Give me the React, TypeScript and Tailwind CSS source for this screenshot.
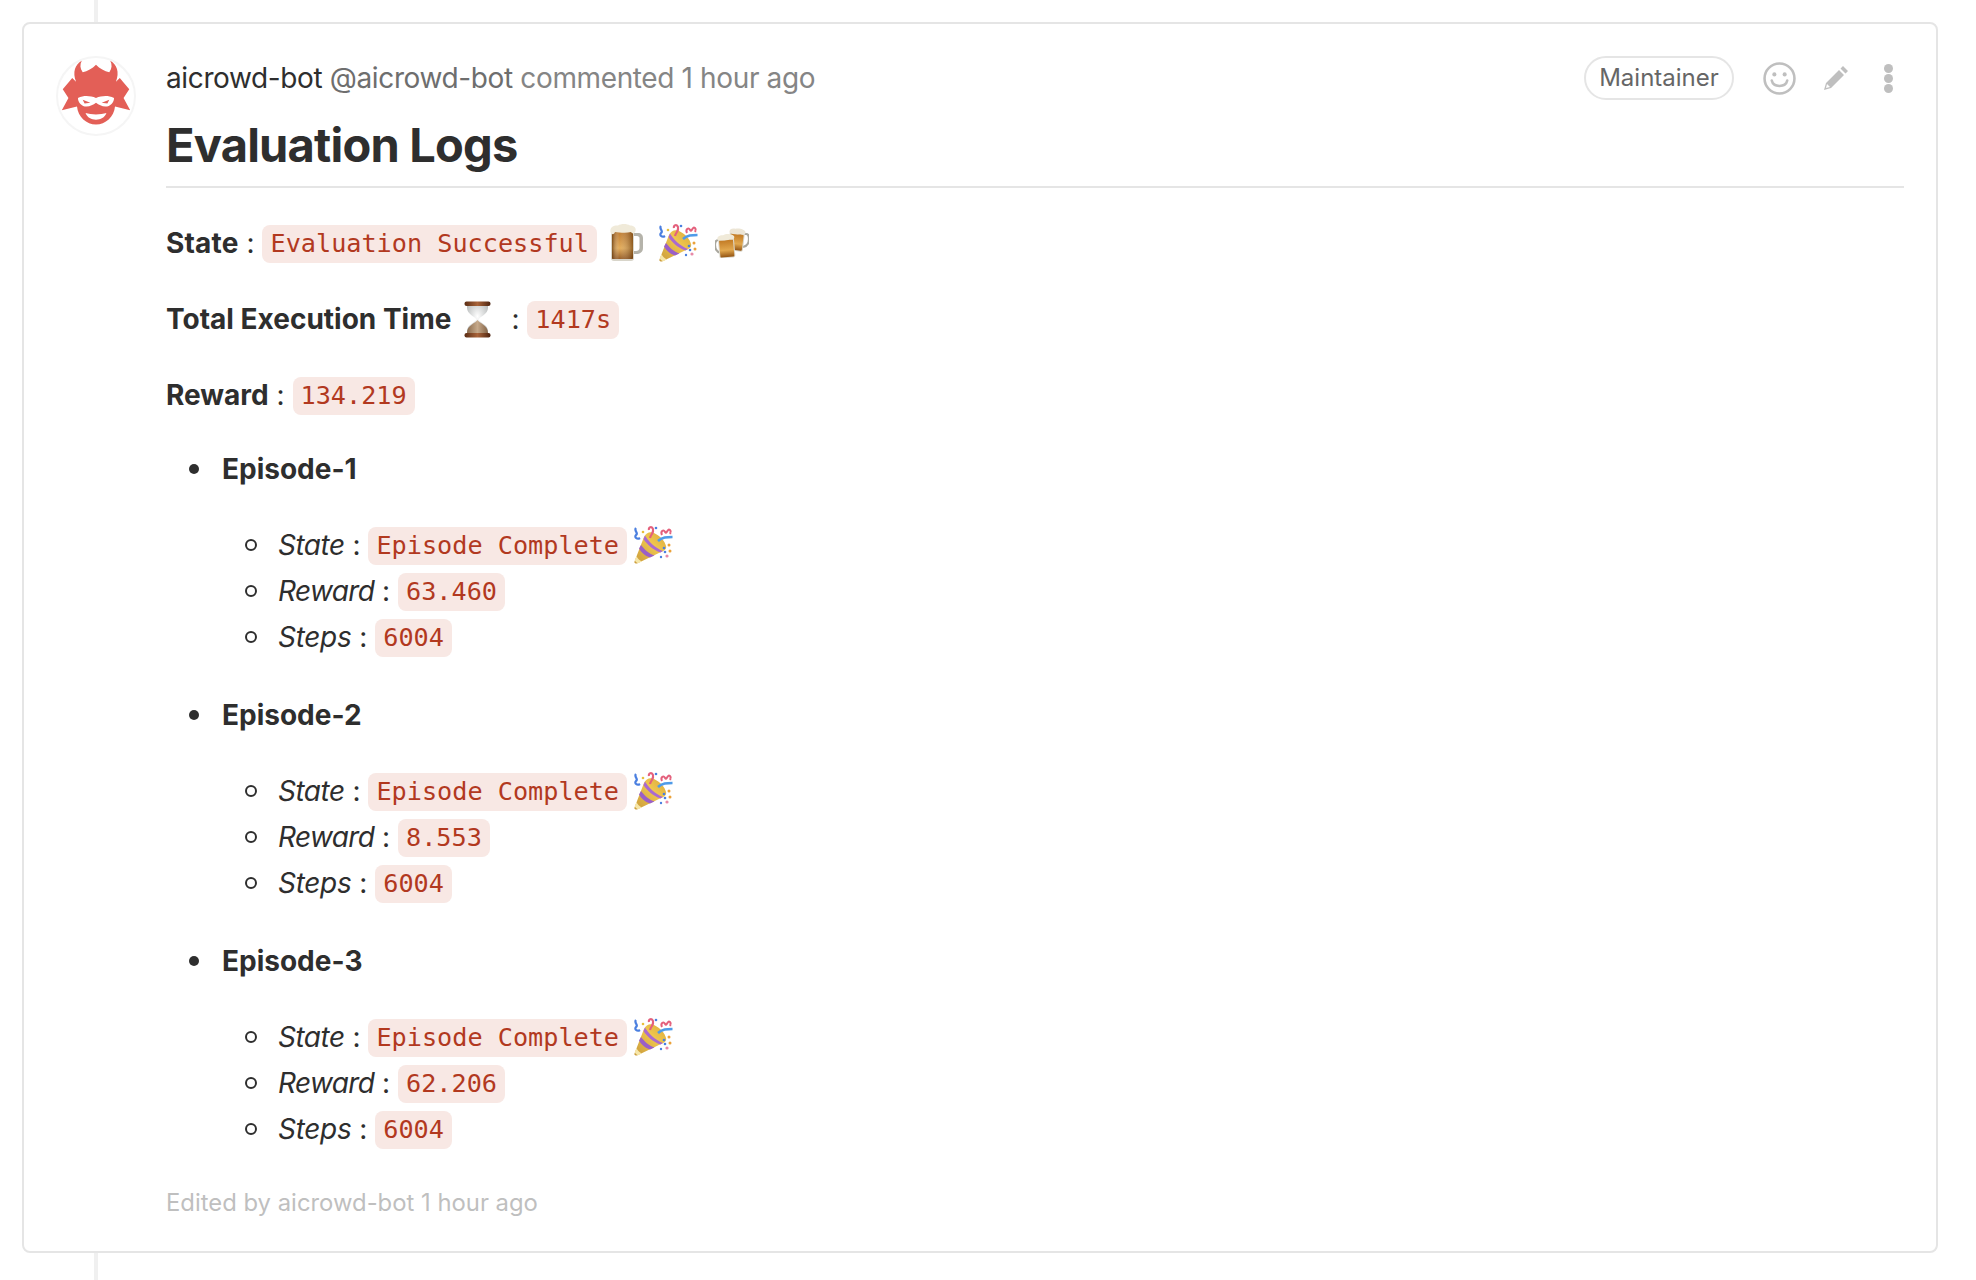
import React from "react";

const Code = ({ children }: { children: React.ReactNode }) => (
  <code className="relative top-[-1px] inline-block rounded-lg bg-[#f8e8e4] px-2 py-[4px] font-['DejaVu_Sans_Mono',monospace] text-[25.2px] leading-[30px] text-[#b2391f]">
    {children}
  </code>
);

const Popper = ({ className = "" }: { className?: string }) => (
  <svg viewBox="0 0 39 39" className={`inline-block h-[39px] w-[39px] ${className}`}>
    <defs>
      <linearGradient id="cone" x1="0" y1="1" x2="1" y2="0">
        <stop offset="0" stopColor="#c99a3a" />
        <stop offset="0.6" stopColor="#efc64e" />
        <stop offset="1" stopColor="#d9a83a" />
      </linearGradient>
    </defs>
    <path d="M0.500 36.500 L10 12 C12 8 16 6 20 8 C26 11 31 16 32 21 C33 24 30 26 27 27 L3 38.500 C1 38.500 0 38 0.500 36.500 Z" fill="url(#cone)" />
    <path d="M7 20 C10 24 15 29 20.500 30.500 L16 32.500 C11 31 7 27 5 23.500 Z" fill="#9a5fc8" />
    <path d="M11 10.500 C14 16 21 23 29 26 L26.500 27.500 C19 25 12.500 19 9.500 14 Z" fill="#a96ad0" />
    <path d="M2.500 31 C3.500 33.500 5.500 35.500 8 36.500 L4 38.300 C2 37.500 1 36 0.800 35 Z" fill="#f6e6a8" />
    <path d="M2 3 C-0.500 6 5 8 2 10 C0 12 3 15 6 13" stroke="#4a7fe0" strokeWidth="2.200" fill="none" />
    <path d="M16 13 C17 9 20 8 19 4 C18 1 14 2 15 5" stroke="#e4607c" strokeWidth="2.200" fill="none" />
    <path d="M28 10 C26 6 30 4 31 7 C33 10 33 3 36 5 C38 7 35 9 37 8" stroke="#e4607c" strokeWidth="2" fill="none" />
    <path d="M24 16 C28 12 33 12 38.500 12" stroke="#4f9be8" strokeWidth="2.500" fill="none" />
    <circle cx="35" cy="20" r="1.500" fill="#eba23a" />
    <circle cx="30" cy="23" r="1.300" fill="#4a7fe0" />
    <circle cx="31" cy="27" r="1.300" fill="#4a7fe0" />
    <circle cx="36" cy="26" r="1.500" fill="#eba23a" />
    <circle cx="33" cy="31" r="1.600" fill="#e88aa8" />
    <circle cx="27" cy="32" r="1.200" fill="#4a7fe0" />
    <circle cx="9" cy="7" r="1.300" fill="#e8c03c" />
    <circle cx="22" cy="3" r="1.300" fill="#4a7fe0" />
  </svg>
);

const Beer = () => (
  <svg viewBox="0 0 33 37" className="inline-block h-[37px] w-[33px]">
    <defs>
      <linearGradient id="amber" x1="0" y1="0" x2="0" y2="1">
        <stop offset="0" stopColor="#b86e1c" />
        <stop offset="0.6" stopColor="#e0a348" />
        <stop offset="1" stopColor="#8c4c10" />
      </linearGradient>
      <linearGradient id="shade" x1="0" y1="0" x2="1" y2="0">
        <stop offset="0" stopColor="#5e3208" stopOpacity="0.700" />
        <stop offset="0.35" stopColor="#fff" stopOpacity="0.100" />
        <stop offset="1" stopColor="#5e3208" stopOpacity="0.600" />
      </linearGradient>
    </defs>
    <path d="M23 9 H28 C31 9 33 11 33 14 V24 C33 28 30 30 26 30 H22 V27 H26 C28 27 29.500 26 29.500 24 V14 C29.500 13 28.500 12 27 12 H23 Z" fill="#b5b3aa" />
    <rect x="1" y="5" width="23" height="32" rx="3" fill="#d8d5ca" />
    <rect x="2" y="8" width="21" height="27" rx="1" fill="url(#amber)" />
    <rect x="2" y="8" width="21" height="27" rx="1" fill="url(#shade)" />
    <path d="M0.500 8 C-0.500 3 4 1 8 1.500 C11 -0.500 17 -0.500 20 1.500 C24 1.500 26.500 4 25.500 7 C25 10 22 10 21 8 C16 9.500 9 8.500 5 8 C4 11 1 11 0.500 8 Z" fill="#f0ead9" />
  </svg>
);

const Beers = () => (
  <svg viewBox="0 0 34 30" className="inline-block h-[30px] w-[34px]">
    <defs>
      <linearGradient id="amber2" x1="0" y1="0" x2="0" y2="1">
        <stop offset="0" stopColor="#c27a24" />
        <stop offset="0.6" stopColor="#e2a84e" />
        <stop offset="1" stopColor="#955614" />
      </linearGradient>
    </defs>
    <path d="M27 6 H31 C33 6 34 8 34 11 C34 15 32 18 28 19" stroke="#a9a79e" strokeWidth="2.200" fill="none" />
    <g transform="rotate(7 21 12)">
      <rect x="14" y="3" width="15" height="20" rx="2" fill="#d8d5ca" />
      <rect x="15" y="6" width="13" height="16" rx="1" fill="url(#amber2)" />
      <path d="M13.500 5 C13 2 16 0.500 19 1 C22 -0.500 28 0 29.500 3 C30 6 27 6.500 25 5.500 C21 7 16 6.500 13.500 5 Z" fill="#ece5d5" />
    </g>
    <path d="M5 12 H3.500 C1 12 0 14 0 17 C0 21 2 24 6 25" stroke="#a9a79e" strokeWidth="2.200" fill="none" />
    <g transform="rotate(-5 11 18)">
      <rect x="3.500" y="9" width="16" height="21" rx="2" fill="#dedbd0" />
      <rect x="4.500" y="12" width="14" height="17" rx="1" fill="url(#amber2)" />
      <path d="M3 11 C2.500 8 5.500 6.500 9 7 C12 5.500 18 6 20 9 C20.500 12 17.500 12.500 15.500 11.500 C11 13 6 12.500 3 11 Z" fill="#f0ead9" />
    </g>
  </svg>
);

const Hourglass = () => (
  <svg viewBox="0 0 27 37" className="ml-[13px] inline-block h-[37px] w-[27px] align-[-9px]">
    <defs>
      <radialGradient id="glass" cx="0.500" cy="0.400" r="0.600">
        <stop offset="0" stopColor="#ffffff" />
        <stop offset="1" stopColor="#b9bcbc" />
      </radialGradient>
      <linearGradient id="sand" x1="0" y1="0" x2="1" y2="0">
        <stop offset="0" stopColor="#8a6a4c" />
        <stop offset="0.500" stopColor="#c6a98a" />
        <stop offset="1" stopColor="#836346" />
      </linearGradient>
      <linearGradient id="wood" x1="0" y1="0" x2="1" y2="0">
        <stop offset="0" stopColor="#5a2c14" />
        <stop offset="0.500" stopColor="#a9643a" />
        <stop offset="1" stopColor="#4d2410" />
      </linearGradient>
    </defs>
    <path d="M3 3 H24 V7 C24 13 16 15.500 14.500 18.500 C16 21.500 24 24 24 30 V34 H3 V30 C3 24 11 21.500 12.500 18.500 C11 15.500 3 13 3 7 Z" fill="url(#glass)" />
    <path d="M13.500 19 C15 22 24 24 24 32 V34 H3 V32 C3 24 12 22 13.500 19 Z" fill="url(#sand)" />
    <rect x="0.500" y="0.500" width="26" height="4.500" rx="2" fill="url(#wood)" />
    <rect x="0.500" y="32" width="26" height="4.500" rx="2" fill="url(#wood)" />
  </svg>
);

const Logo = () => (
  <svg viewBox="0 0 80 80" className="h-full w-full">
    <path
      d="M25 3 C18 7 15 15 19 25 L15 21 L5 33 L11 42 L4 55 L20 51 C21 62 30 70 40 70 C50 70 59 62 60 51 L76 55 L69 42 L75 33 L65 21 L61 25 C65 15 62 7 55 3 C57 7 57 11 54 15 C49 14 44 11 40 7 C36 11 31 14 26 15 C23 11 23 7 25 3 Z"
      fill="#e35f57"
    />
    <path d="M21 42 C28 39 34 40 40 42 C46 40 52 39 59 42 C59 47 55 51 50 51 C46 51 43 49 40 47 C37 49 34 51 30 51 C25 51 21 47 21 42 Z" fill="#fff" />
    <path d="M26 44 L34 47 L28 48 Z M54 44 L46 47 L52 48 Z" fill="#e35f57" />
    <path d="M29 58 C35 60 45 60 51 58 C49 63 45 65 40 65 C35 65 31 63 29 58 Z" fill="#fff" />
  </svg>
);

const Item = ({ children }: { children: React.ReactNode }) => (
  <li className="relative list-none">
    <span className="absolute left-[-33px] top-[17px] h-[12px] w-[12px] rounded-full border-2 border-[#2e2e2e]" />
    {children}
  </li>
);

const Episode = ({ name, reward }: { name: string; reward: string }) => (
  <li className="relative mb-[31px] list-none">
    <span className="absolute left-[-33px] top-[19px] h-[10px] w-[10px] rounded-full bg-[#2e2e2e]" />
    <strong className="relative top-[1px] font-bold">{name}</strong>
    <ul className="mt-[31px] pl-[56px]">
      <Item>
        <em className="tracking-[-0.5px]">State</em> : <Code>Episode Complete</Code>{" "}
        <Popper className="ml-[-1px] align-[-9px]" />
      </Item>
      <Item>
        <em className="tracking-[-0.65px]">Reward</em> : <Code>{reward}</Code>
      </Item>
      <Item>
        <em className="tracking-[-0.3px]">Steps</em> : <Code>6004</Code>
      </Item>
    </ul>
  </li>
);

export default function App() {
  return (
    <div className="flex h-[1280px] w-[1976px] flex-col bg-white font-['Inter',sans-serif] text-[28px] leading-[46px] text-[#2e2e2e]">
      <div className="ml-[94px] h-[22px] w-[4px] bg-[#f0f0f0]" />
      <div className="mx-[22px] flex h-[1231px] w-[1916px] rounded-lg border-2 border-[#e5e5e5] pl-[32px] pr-[32px] pt-[32px]">
        <div className="h-[80px] w-[80px] shrink-0 rounded-full border-2 border-[#f5f5f5] bg-white">
          <Logo />
        </div>
        <div className="ml-[30px] min-w-0 flex-1">
          <div className="flex h-[44px] items-center justify-between">
            <div className="leading-[40px] tracking-[-0.37px]">
              <span>aicrowd-bot</span> <span className="text-[#6e6e6e]">@aicrowd-bot</span>{" "}
              <span className="text-[#858585]">commented 1 hour ago</span>
            </div>
            <div className="mr-[9px] flex items-center">
              <span className="flex h-[44px] w-[150px] items-center justify-center rounded-full border-2 border-[#e5e5e5] text-[24px] text-[#666666]">
                Maintainer
              </span>
              <svg viewBox="0 0 32 32" className="ml-[29px] h-[33px] w-[33px]">
                <circle cx="16" cy="16" r="14.500" fill="none" stroke="#bfbfbf" strokeWidth="2.500" />
                <circle cx="11" cy="12" r="2" fill="#bfbfbf" />
                <circle cx="21" cy="12" r="2" fill="#bfbfbf" />
                <path d="M8.500 18 C10 25 22 25 23.500 18" fill="none" stroke="#bfbfbf" strokeWidth="2.500" strokeLinecap="round" />
              </svg>
              <svg viewBox="0 0 26 26" className="ml-[27px] h-[26px] w-[26px]">
                <path d="M20 1 L25 6 L22.500 8.500 L17.500 3.500 Z M16 5 L21 10 L8 23 L1 25 L3 18 Z" fill="#bfbfbf" />
                <path d="M4 19 L7 22 L3 23 Z" fill="#fff" />
              </svg>
              <div className="ml-[35px] mr-[2px] flex flex-col gap-[1px]">
                <span className="h-[9px] w-[9px] rounded-full bg-[#bfbfbf]" />
                <span className="h-[9px] w-[9px] rounded-full bg-[#bfbfbf]" />
                <span className="h-[9px] w-[9px] rounded-full bg-[#bfbfbf]" />
              </div>
            </div>
          </div>
          <h1 className="mt-[15px] border-b-2 border-[#e5e5e5] pb-[11px] text-[47px] font-bold leading-[60px] tracking-[-0.8px]">Evaluation Logs</h1>
          <p className="mt-[32px] h-[46px] whitespace-nowrap">
            <strong className="font-bold tracking-[0.2px]">State</strong> : <Code>Evaluation Successful</Code>
            <span className="ml-[13px] inline-flex h-[39px] items-center align-[-8px]">
              <Beer />
              <span className="ml-[16px] flex">
                <Popper />
              </span>
              <span className="ml-[17px] flex">
                <Beers />
              </span>
            </span>
          </p>
          <p className="mt-[30px] h-[46px] whitespace-nowrap">
            <strong className="font-bold">Total Execution Time</strong>
            <Hourglass />
            <span className="ml-[20px]">:</span> <Code>1417s</Code>
          </p>
          <p className="mt-[30px] h-[46px] whitespace-nowrap">
            <strong className="font-bold">Reward</strong> : <Code>134.219</Code>
          </p>
          <ul className="mt-[27px] pl-[56px]">
            <Episode name="Episode-1" reward="63.460" />
            <Episode name="Episode-2" reward="8.553" />
            <Episode name="Episode-3" reward="62.206" />
          </ul>
          <p className="text-[23.85px] leading-[40px] text-[#bfbfbf]">Edited by aicrowd-bot 1 hour ago</p>
        </div>
      </div>
      <div className="ml-[94px] w-[4px] flex-1 bg-[#f0f0f0]" />
    </div>
  );
}
